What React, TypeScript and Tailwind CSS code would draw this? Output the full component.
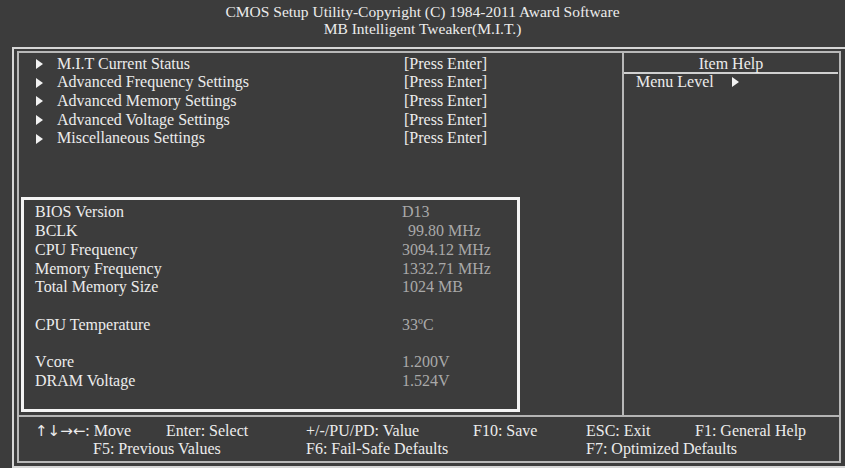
const menuItems = [
  "M.I.T Current Status",
  "Advanced Frequency Settings",
  "Advanced Memory Settings",
  "Advanced Voltage Settings",
  "Miscellaneous Settings",
];

const infoRows: { label: string; value: string; indent?: boolean }[] = [
  { label: "BIOS Version", value: "D13" },
  { label: "BCLK", value: "99.80 MHz", indent: true },
  { label: "CPU Frequency", value: "3094.12 MHz" },
  { label: "Memory Frequency", value: "1332.71 MHz" },
  { label: "Total Memory Size", value: "1024 MB" },
  { label: "", value: "" },
  { label: "CPU Temperature", value: "33\u00BAC" },
  { label: "", value: "" },
  { label: "Vcore", value: "1.200V" },
  { label: "DRAM Voltage", value: "1.524V" },
];

const Arrow = () => (
  <svg width="7" height="10" viewBox="0 0 7 10" className="shrink-0">
    <polygon points="0,0 7,5 0,10" fill="#f2f2f2" />
  </svg>
);

const App = () => {
  return (
    <div
      className="h-[468px] w-[845px] overflow-hidden bg-[#3c3c3c] text-[16px] text-[#ececec]"
      style={{ fontFamily: '"Liberation Serif", "Times New Roman", serif' }}
    >
      {/* Title */}
      <div className="pt-[3px] text-center text-[15.5px] leading-[17px]">
        <p>CMOS Setup Utility-Copyright (C) 1984-2011 Award Software</p>
        <p>MB Intelligent Tweaker(M.I.T.)</p>
      </div>

      {/* Outer frame */}
      <div className="ml-[12px] mt-[10px] h-[421px] w-[840px] border-2 border-[#d6d6d6] pl-[3px] pt-[2px]">
        {/* Inner frame */}
        <div className="flex h-[412px] w-[824px] flex-col border-2 border-[#b8b8b8]">
          {/* Main */}
          <div className="flex h-[362px]">
            {/* Left column */}
            <div className="w-[603px] pt-[1.5px]">
              {menuItems.map((item) => (
                <div key={item} className="flex h-[18.7px] items-center leading-[18.7px]">
                  <div className="flex w-[38px] pl-[17px]">
                    <Arrow />
                  </div>
                  <span className="w-[347px]">{item}</span>
                  <span>[Press Enter]</span>
                </div>
              ))}

              {/* Info box */}
              <div className="ml-[2px] mt-[49px] h-[215px] w-[499px] border-[3px] border-[#f4f4f4] pt-[3.5px]">
                {infoRows.map((row, i) => (
                  <div key={i} className="flex h-[18.7px] leading-[18.7px]">
                    <span className="w-[378px] pl-[11px]">{row.label}</span>
                    <span className={row.indent ? "pl-[6px] text-[#a9a9a9]" : "text-[#a9a9a9]"}>
                      {row.value}
                    </span>
                  </div>
                ))}
              </div>
            </div>

            {/* Right panel */}
            <div className="flex-1 border-l-2 border-[#b8b8b8]">
              <div className="mr-[1px] h-[21px] border-b-2 border-[#d0d0d0] pt-[2px] text-center leading-[17px]">
                Item Help
              </div>
              <div className="flex items-center pl-[12px] leading-[16px]">
                <span className="w-[96px]">Menu Level</span>
                <Arrow />
              </div>
            </div>
          </div>

          {/* Footer */}
          <div className="flex-1 border-t-2 border-[#b4b4b4] pl-[16px] pt-[5px] leading-[17px]">
            <div className="flex">
              <span className="w-[131px]">
                <span className="text-[15px]" style={{ fontFamily: '"DejaVu Sans", sans-serif' }}>
                  ↑↓→←
                </span>
                : Move
              </span>
              <span className="w-[140px]">Enter: Select</span>
              <span className="w-[167px]">+/-/PU/PD: Value</span>
              <span className="w-[113px]">F10: Save</span>
              <span className="w-[109px]">ESC: Exit</span>
              <span>F1: General Help</span>
            </div>
            <div className="flex">
              <span className="w-[58px]" />
              <span className="w-[213px]">F5: Previous Values</span>
              <span className="w-[280px]">F6: Fail-Safe Defaults</span>
              <span>F7: Optimized Defaults</span>
            </div>
          </div>
        </div>
      </div>
    </div>
  );
};

export default App;
